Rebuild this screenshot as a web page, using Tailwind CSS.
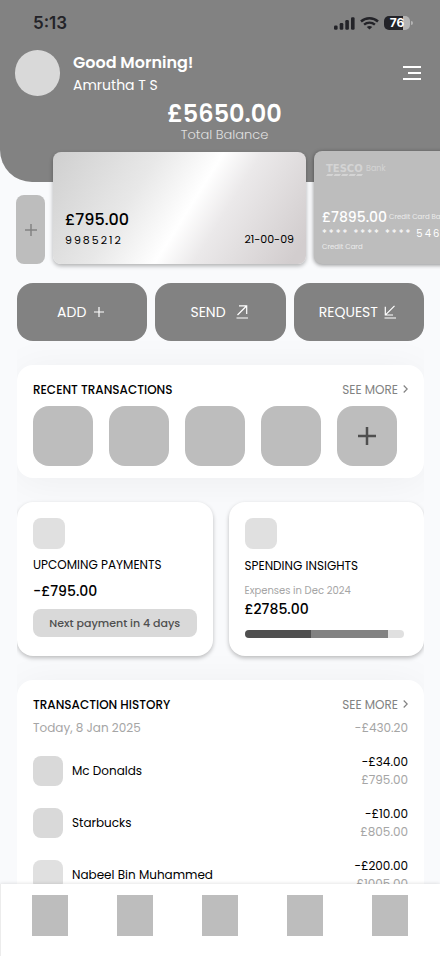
<!DOCTYPE html>
<html lang="en">
<head>
<meta charset="utf-8">
<meta name="viewport" content="width=device-width, initial-scale=1">
<title>Banking home</title>
<script src="https://cdn.jsdelivr.net/npm/@tailwindcss/browser@4"></script>
</head>
<body class="flex h-dvh flex-col overflow-hidden bg-[#f9fafc] font-[Poppins,Inter,sans-serif] text-black">
<main class="min-h-0 flex-1 overflow-y-auto [scrollbar-width:none]">
  <header class="rounded-bl-[32px] bg-[#828282] pt-3 pb-[38px] text-white">
    <div class="flex h-[22px] items-center justify-between pr-[27px] pl-[33px] font-[Inter,sans-serif] text-[#232328]">
      <time class="text-[17px] leading-[22px] font-semibold">5:13</time>
      <div class="flex items-center gap-[5px]">
        <svg class="h-[13px] w-[21px]" viewBox="0 0 21 13" fill="currentColor" aria-hidden="true"><rect x="0" y="8.5" width="3.6" height="4.2" rx="1.2"/><rect x="5.7" y="6" width="3.6" height="6.7" rx="1.2"/><rect x="11.3" y="3" width="3.6" height="9.7" rx="1.2"/><rect x="17" y="0.3" width="3.6" height="12.4" rx="1.2"/></svg>
        <svg class="h-[13px] w-[19px]" viewBox="0 0 19 13" fill="none" stroke="currentColor" stroke-width="2.4" aria-hidden="true"><path d="M1 4.5C5.6.2 13.4.2 18 4.5"/><path d="M4.1 7.6c3-2.7 7.800-2.700 10.800 0"/><path d="M9.500 12.500 6.800 9.900c1.500-1.200 3.900-1.200 5.400 0z" fill="currentColor" stroke="none"/></svg>
        <div class="flex items-center gap-px">
          <div class="flex h-[14px] w-[26px] items-center justify-center rounded-[5px] bg-linear-to-r from-[#232328] from-73% to-[#b4b4b4] to-73% text-xs font-bold text-white">76</div>
          <div class="h-1 w-[2px] rounded-r-full bg-[#b4b4b4]"></div>
        </div>
      </div>
    </div>
    <div class="mt-4 flex items-center gap-[13px] pr-[19px] pl-[15px]">
      <div class="h-[46px] w-[45px] rounded-full bg-[#d9d9d9]"></div>
      <div class="flex-1 pt-[2px]">
        <h1 class="text-base leading-[22px] font-semibold">Good Morning!</h1>
        <p class="text-sm leading-[22px]">Amrutha T S</p>
      </div>
      <button type="button" aria-label="Menu"><svg class="h-[14px] w-[18px]" viewBox="0 0 18 14" fill="#fff"><path d="M0 0h18v2H0zM5 6h13v2H5zM0 12h18v2H0z"/></svg></button>
    </div>
    <div class="mt-[6px] pl-[9px] text-center">
      <p class="text-2xl leading-6 font-semibold">£5650.00</p>
      <p class="text-[13px] leading-[18px] font-light text-[#e0e0e0]">Total Balance</p>
    </div>
  </header>

  <section aria-label="Accounts" class="relative -mt-[47px] flex items-end gap-2 overflow-x-auto pt-4 pb-[19px] pl-4 [scrollbar-width:none]">
    <button type="button" aria-label="Add account" class="flex h-[69px] w-[29px] shrink-0 items-center justify-center rounded-lg bg-[#bdbdbd]"><svg class="h-3 w-3" viewBox="0 0 12 12" stroke="#828282" stroke-width="1.5"><path d="M6 0v12M0 6h12"/></svg></button>
    <article class="flex h-28 w-[253px] shrink-0 items-end justify-between rounded-lg bg-[linear-gradient(122deg,#cfcfcf_0%,#e8e8e8_33%,#ffffff_53%,#ebe9ea_65%,#d2cdce_95%)] px-3 pb-4 shadow-[0_2px_4px_rgba(0,0,0,0.3)]">
      <div>
        <p class="text-base leading-6 font-medium">£795.00</p>
        <p class="text-[11px] leading-4 tracking-[2px]">9985212</p>
      </div>
      <p class="text-[11px] leading-[18px]">21-00-09</p>
    </article>
    <article class="h-[113px] w-[253px] shrink-0 rounded-lg bg-[#bdbdbd] px-2 pt-[13px] text-white shadow-[0_1px_4px_rgba(0,0,0,0.45)]">
      <div class="flex items-start gap-[3px] pl-1 text-[#d4d4d4]">
        <div>
          <p class="font-[DejaVu_Sans,sans-serif] text-[10px] leading-[10px] font-bold">TESCO</p>
          <svg class="h-[2px] w-[37px]" viewBox="0 0 37 2" fill="currentColor" aria-hidden="true"><path d="M1.500 0h6L6 2H0zM9 0h6l-1.500 2h-6zM16.500 0h6L21 2h-6zM24 0h6l-1.500 2h-6zM31.500 0h5.500l-1.500 2H30z"/></svg>
        </div>
        <p class="text-[8px] leading-[10px]">Bank</p>
      </div>
      <p class="mt-[31px] flex items-center gap-[2px] leading-5 whitespace-nowrap"><span class="text-sm font-medium">£7895.00</span><span class="text-[7px] text-[#ececec]">Credit Card Balance</span></p>
      <p class="flex gap-1 text-[10px] leading-[14px] tracking-[2px] whitespace-nowrap"><span>****</span><span>****</span><span>****</span><span>5463</span></p>
      <p class="text-[7px] leading-3 text-[#ececec]">Credit Card</p>
    </article>
  </section>

  <div class="mr-4 ml-[17px] overflow-hidden">
    <div class="grid grid-cols-3 gap-2 text-sm text-white">
      <button type="button" class="flex h-[58px] items-center justify-center gap-2 rounded-2xl bg-[#828282] pr-[3px]">ADD <svg class="h-[10px] w-[10px]" viewBox="0 0 10 10" stroke="#fff" stroke-width="1.200"><path d="M5 0v10M0 5h10"/></svg></button>
      <button type="button" class="flex h-[58px] items-center justify-center gap-[10px] rounded-2xl bg-[#828282] pr-[3px]">SEND <svg class="h-[14px] w-3" viewBox="0 0 12 14" fill="none" stroke="#fff" stroke-width="1.200"><path d="M1.500 10 10.500 1M3 .8h7.700V9M.5 13H12"/></svg></button>
      <button type="button" class="flex h-[58px] items-center justify-center gap-[6px] rounded-2xl bg-[#828282] pr-[3px]">REQUEST <svg class="h-[14px] w-3" viewBox="0 0 12 14" fill="none" stroke="#fff" stroke-width="1.200"><path d="M10.500.8 1.500 9.800M1.300 1.700V10H9M.5 13H12"/></svg></button>
    </div>

    <section class="mt-6 rounded-2xl bg-white px-4 pt-4 pb-3 shadow-[0_4px_40px_rgba(0,0,0,0.05)]">
      <div class="flex justify-between text-xs leading-[18px]">
        <h2 class="font-medium">RECENT TRANSACTIONS</h2>
        <a href="#recent" class="flex gap-[5px] text-[#828282]">SEE MORE <svg class="mt-[4px] h-2 w-[5px]" viewBox="0 0 5 8" fill="none" stroke="currentColor" stroke-width="1.200"><path d="M.7.500 4.200 4 .7 7.500"/></svg></a>
      </div>
      <div class="mt-[7px] flex gap-4">
        <div class="size-[60px] rounded-2xl bg-[#bdbdbd]"></div>
        <div class="size-[60px] rounded-2xl bg-[#bdbdbd]"></div>
        <div class="size-[60px] rounded-2xl bg-[#bdbdbd]"></div>
        <div class="size-[60px] rounded-2xl bg-[#bdbdbd]"></div>
        <button type="button" aria-label="New transaction" class="flex size-[60px] items-center justify-center rounded-2xl bg-[#bdbdbd]"><svg class="size-[18px]" viewBox="0 0 18 18" stroke="#4f4f4f" stroke-width="2.500"><path d="M9 0v18M0 9h18"/></svg></button>
      </div>
    </section>

    <div class="mt-6 grid grid-cols-2 gap-4">
      <section class="rounded-2xl bg-white px-4 pt-4 pb-[19px] shadow-[0_2px_4px_rgba(0,0,0,0.25)]">
        <div class="h-[31px] w-8 rounded-lg bg-[#e0e0e0]"></div>
        <h2 class="mt-[7px] text-xs leading-[18px] whitespace-nowrap">UPCOMING PAYMENTS</h2>
        <p class="mt-2 text-sm leading-[18px] font-medium">-£795.00</p>
        <p class="mt-[9px] rounded-lg bg-[#d9d9d9] text-center text-[11px] leading-7 font-medium whitespace-nowrap text-[#4f4f4f]">Next payment in 4 days</p>
      </section>
      <section class="rounded-2xl bg-white px-4 pt-4 pb-4 shadow-[0_2px_4px_rgba(0,0,0,0.25)]">
        <div class="h-[31px] w-8 rounded-lg bg-[#e0e0e0]"></div>
        <h2 class="mt-2 text-xs leading-[18px] whitespace-nowrap">SPENDING INSIGHTS</h2>
        <p class="mt-[7px] text-[10px] leading-[18px] text-[#a5a5a5]">Expenses in Dec 2024</p>
        <p class="text-sm leading-[18px] font-medium">£2785.00</p>
        <div class="mt-3 mr-1 flex h-2 overflow-hidden rounded-full bg-[#e0e0e0]">
          <div class="bg-[#4f4f4f]" style="width:42%"></div>
          <div class="bg-[#828282]" style="width:48%"></div>
        </div>
      </section>
    </div>

    <section class="mt-6 rounded-2xl bg-white p-4 shadow-[0_4px_40px_rgba(0,0,0,0.05)]">
      <div class="flex justify-between text-xs leading-[18px]">
        <h2 class="font-medium">TRANSACTION HISTORY</h2>
        <a href="#history" class="flex gap-[5px] text-[#828282]">SEE MORE <svg class="mt-[4px] h-2 w-[5px]" viewBox="0 0 5 8" fill="none" stroke="currentColor" stroke-width="1.200"><path d="M.7.500 4.200 4 .7 7.500"/></svg></a>
      </div>
      <div class="mt-[5px] flex justify-between text-xs leading-[18px] text-[#a5a5a5]"><p>Today, 8 Jan 2025</p><p>-£430.20</p></div>
      <ul class="mt-4 flex flex-col gap-4 text-xs leading-[18px]">
        <li class="flex items-center gap-[9px]"><div class="size-[30px] rounded-lg bg-[#d9d9d9]"></div><p class="flex-1">Mc Donalds</p><div class="text-right"><p>-£34.00</p><p class="text-[#a5a5a5]">£795.00</p></div></li>
        <li class="flex items-center gap-[9px]"><div class="size-[30px] rounded-lg bg-[#d9d9d9]"></div><p class="flex-1">Starbucks</p><div class="text-right"><p>-£10.00</p><p class="text-[#a5a5a5]">£805.00</p></div></li>
        <li class="flex items-center gap-[9px]"><div class="size-[30px] rounded-lg bg-[#e0e0e0]"></div><p class="flex-1">Nabeel Bin Muhammed</p><div class="text-right"><p>-£200.00</p><p class="text-[#a5a5a5]">£1005.00</p></div></li>
      </ul>
    </section>
  </div>
</main>
<nav aria-label="Main" class="relative flex justify-between border-l border-[#ececec] bg-white pt-[11px] pr-8 pb-5 pl-[31px] shadow-[0_0_4px_rgba(0,0,0,0.15)]">
  <a href="#home" aria-label="Home" class="h-[41px] w-9 bg-[#bdbdbd]"></a>
  <a href="#cards" aria-label="Cards" class="h-[41px] w-9 bg-[#bdbdbd]"></a>
  <a href="#pay" aria-label="Pay" class="h-[41px] w-9 bg-[#bdbdbd]"></a>
  <a href="#insights" aria-label="Insights" class="h-[41px] w-9 bg-[#bdbdbd]"></a>
  <a href="#profile" aria-label="Profile" class="h-[41px] w-9 bg-[#bdbdbd]"></a>
</nav>
</body>
</html>
